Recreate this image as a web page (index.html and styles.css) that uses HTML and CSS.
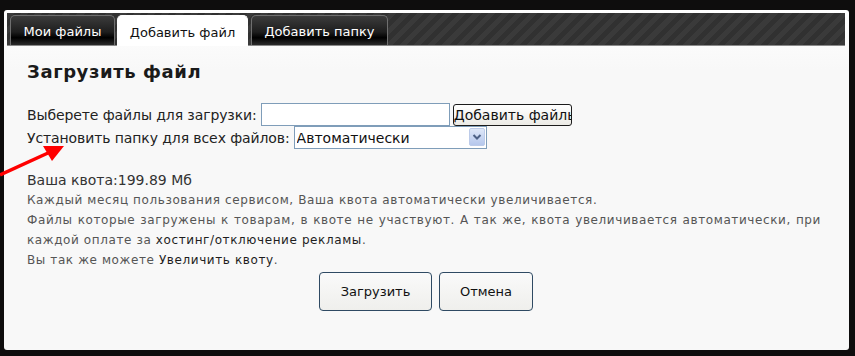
FILE: index.html
```html
<!DOCTYPE html>
<html lang="ru">
<head>
<meta charset="utf-8">
<title>Загрузить файл</title>
<link rel="stylesheet" href="styles.css">
</head>
<body>
<div class="panel">
  <div class="tabbar">
    <div class="tab tab-files">Мои файлы</div>
    <div class="tab tab-active">Добавить файл</div>
    <div class="tab tab-folder">Добавить папку</div>
  </div>
  <div class="content">
    <h1 class="title">Загрузить файл</h1>
    <div class="row">
      <span class="label">Выберете файлы для загрузки:</span>
      <input class="text-input" type="text">
      <button class="add-btn" type="button">Добавить файлы</button>
    </div>
    <div class="row">
      <span class="label">Установить папку для всех файлов:</span>
      <div class="select-wrap">
        <select class="select"><option>Автоматически</option></select>
        <svg class="select-arrow" width="16" height="18" viewBox="0 0 16 18">
          <defs>
            <linearGradient id="ag" x1="0" y1="0" x2="0" y2="1">
              <stop offset="0" stop-color="#dfe8f8"/>
              <stop offset="1" stop-color="#b4c6ec"/>
            </linearGradient>
          </defs>
          <rect x="0.5" y="0.5" width="15" height="17" rx="1.5" fill="url(#ag)" stroke="#bccbe9"/>
          <path d="M4.5 7 L8 10.5 L11.5 7" fill="none" stroke="#4d6185" stroke-width="2"/>
        </svg>
      </div>
    </div>
    <div class="info">
      <p class="quota">Ваша квота:199.89 Мб</p>
      <p class="note">Каждый месяц пользования сервисом, Ваша квота автоматически увеличивается.</p>
      <p class="note justify">Файлы которые загружены к товарам, в квоте не участвуют. А так же, квота увеличивается автоматически, при каждой оплате за <span class="link">хостинг/отключение рекламы</span>.</p>
      <p class="note">Вы так же можете <span class="link">Увеличить квоту</span>.</p>
    </div>
    <div class="actions">
      <button class="btn btn-upload" type="button">Загрузить</button>
      <button class="btn btn-cancel" type="button">Отмена</button>
    </div>
  </div>
  <svg class="pointer" width="70" height="40" viewBox="0 0 70 40">
    <path d="M0 34 L48 12" stroke="#f00" stroke-width="3.5" fill="none"/>
    <path d="M64 5 L43 5 L52 20 Z" fill="#f00"/>
  </svg>
</div>
</body>
</html>
```
FILE: styles.css
```css
html, body {
  margin: 0;
  padding: 0;
}
body {
  background: #0e0d0d;
  font-family: "DejaVu Sans", Verdana, sans-serif;
  width: 855px;
  height: 356px;
  overflow: hidden;
}
.panel {
  position: relative;
  margin: 10px 0 0 4px;
  width: 845px;
  height: 340px;
  box-sizing: border-box;
  padding: 3px 4px 2px 3px;
  background: linear-gradient(#ffffff, #f8f8f8 60px);
  border-radius: 3px;
}
.tabbar {
  height: 33px;
  box-sizing: border-box;
  display: flex;
  align-items: flex-end;
  padding-left: 3px;
  gap: 2px;
  background: repeating-linear-gradient(-45deg, #3a3a3a 0 5px, #313131 5px 10px);
  border-bottom: 1px solid #8a8a8a;
}
.tab {
  height: 30px;
  box-sizing: border-box;
  display: flex;
  align-items: center;
  justify-content: center;
  font-size: 13px;
  color: #fff;
  border: 1px solid #6f6f6f;
  border-bottom: none;
  border-radius: 5px 5px 0 0;
  background: linear-gradient(#3c3c3c, #1e1e1e 55%, #000 75%, #2b2b2b);
  padding-top: 2px;
}
.tab-files { width: 105px; }
.tab-active {
  width: 131px;
  background: #fff;
  color: #111;
  border-color: #fff;
  height: 31px;
  margin-bottom: -1px;
}
.tab-folder { width: 137px; margin-left: 1px; }
.content {
  padding: 15px 24px 0 20px;
}
.title {
  margin: 0;
  font-size: 18px;
  letter-spacing: 0.6px;
  line-height: 22px;
  font-weight: bold;
  color: #1a1a1a;
}
.row {
  display: flex;
  align-items: center;
  height: 23px;
  font-size: 14px;
  color: #222;
}
.title + .row { margin-top: 20px; }
.label { margin-right: 4px; letter-spacing: -0.1px; }
.text-input {
  width: 189px;
  height: 23px;
  box-sizing: border-box;
  border: 1px solid #7f9db9;
  background: #fff;
  margin: 0 3px 0 0;
  padding: 0;
}
.add-btn {
  width: 119px;
  height: 22px;
  box-sizing: border-box;
  padding: 0;
  border: 1px solid #1c1c1c;
  border-radius: 3px;
  background: linear-gradient(#ffffff, #ecebe6);
  font-family: "DejaVu Sans", Verdana, sans-serif;
  font-size: 14px;
  color: #111;
  overflow: hidden;
  white-space: nowrap;
  text-align: left;
}
.select-wrap {
  position: relative;
  width: 193px;
  height: 23px;
}
.select {
  appearance: none;
  -webkit-appearance: none;
  width: 193px;
  height: 23px;
  box-sizing: border-box;
  border: 1px solid #7f9db9;
  border-radius: 0;
  background: #fff;
  font-family: "DejaVu Sans", Verdana, sans-serif;
  font-size: 14px;
  color: #111;
  padding: 0 0 0 2px;
}
.select-arrow {
  position: absolute;
  right: 2px;
  top: 2px;
}
.info {
  margin-top: 21px;
  color: #555;
}
.info p {
  margin: 0;
  line-height: 20px;
}
.quota {
  font-size: 14px;
  color: #333;
}
.note {
  font-size: 12px;
  letter-spacing: 0.6px;
}
.justify { text-align: justify; }
.link { color: #1e1e1e; }
.actions {
  display: flex;
  justify-content: center;
  gap: 7px;
  margin-top: 2px;
  padding-left: 4px;
}
.btn {
  height: 39px;
  box-sizing: border-box;
  border: 1px solid #2f4a63;
  border-radius: 4px;
  background: linear-gradient(#fafafa, #efefec);
  font-family: "DejaVu Sans", Verdana, sans-serif;
  font-size: 13px;
  color: #111;
  padding: 0;
}
.btn-upload { width: 113px; }
.btn-cancel { width: 94px; }
.pointer {
  position: absolute;
  left: -4px;
  top: 131px;
}
```
